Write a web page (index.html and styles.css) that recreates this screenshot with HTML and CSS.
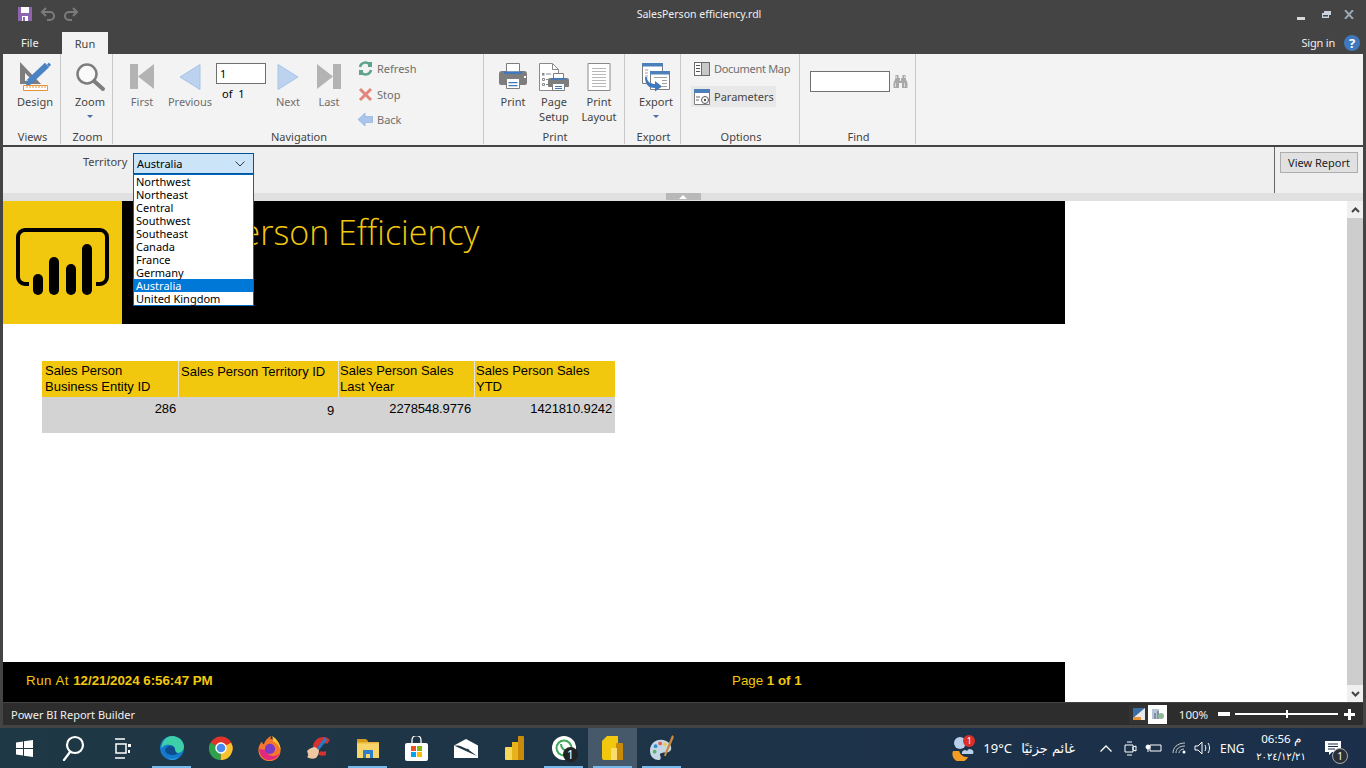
FILE: index.html
```html
<!DOCTYPE html>
<html lang="en">
<head>
<meta charset="utf-8">
<title>SalesPerson efficiency.rdl</title>
<link rel="stylesheet" href="styles.css">
</head>
<body>
<div class="titlebar">
  <div class="qat">
    <svg width="16" height="16" viewBox="0 0 16 16"><path d="M1 1h14v14H1z" fill="#8e63b0"/><path d="M4 1h8v6H4z" fill="#fff"/><path d="M5 10h6v5H5z" fill="#fff"/><path d="M6 11h2v4H6z" fill="#8e63b0"/></svg>
    <svg width="16" height="16" viewBox="0 0 16 16" fill="none" stroke="#7b7b7b" stroke-width="2"><path d="M6 2 2 6l4 4"/><path d="M2 6h8a4 4 0 0 1 0 8H7"/></svg>
    <svg width="16" height="16" viewBox="0 0 16 16" fill="none" stroke="#7b7b7b" stroke-width="2"><path d="m10 2 4 4-4 4"/><path d="M14 6H6a4 4 0 0 0 0 8h3"/></svg>
  </div>
  <div class="doc-title">SalesPerson efficiency.rdl</div>
  <div class="win-btns">
    <svg class="w-min" width="8" height="3" viewBox="0 0 8 3"><path d="M0 0h8v3H0z" fill="#d8d8d8"/></svg>
    <svg class="w-res" width="9" height="7" viewBox="0 0 9 7"><path d="M2 0h7v4H7V2H2z" fill="#c8d4e0"/><path d="M0 2h7v5H0z" fill="#c8d4e0"/><path d="M1 4h5v1.500H1z" fill="#444"/></svg>
    <svg width="10" height="9" viewBox="0 0 10 9" fill="none" stroke="#9aa7b4" stroke-width="2"><path d="m1 0 8 9M9 0 1 9"/></svg>
  </div>
</div>
<div class="tabs">
  <div class="tab-file">File</div>
  <div class="tab-run">Run</div>
  <div class="tab-spacer"></div>
  <div class="signin">Sign in</div>
  <div class="help">?</div>
</div>

<div class="ribbon">
  <section class="group g-views">
    <div class="g-body">
      <div class="rb w50">
        <svg class="ico" width="32" height="32" viewBox="0 0 32 32"><path d="M1 0v22h21z" fill="#7d7d7d"/><path d="M6 11v8h8z" fill="#f3f3f3"/><path d="M10 20 28 3" stroke="#4a83c4" stroke-width="6" fill="none"/><path d="M7.500 18 12 23 7 25z" fill="#4a83c4"/><path d="M28 2.500 30 .5l2 2.500-2 2z" fill="#4a83c4"/><path d="M4.500 23.500h24v5h-24z" fill="#fff" stroke="#e8923a"/><path d="M8 24v2M11 24v2M14 24v2M17 24v2M20 24v2M23 24v2M26 24v2" stroke="#e8923a"/></svg>
        <span>Design</span>
      </div>
    </div>
    <div class="g-label">Views</div>
  </section>

  <section class="group g-zoom">
    <div class="g-body">
      <div class="rb w44">
        <svg class="ico" width="32" height="32" viewBox="0 0 32 32" fill="none"><circle cx="13" cy="12" r="9.500" stroke="#7d7d7d" stroke-width="2.500" fill="#fafafa"/><path d="m20 19 9 8" stroke="#7d7d7d" stroke-width="4" stroke-linecap="round"/></svg>
        <span>Zoom</span>
        <i class="caret"></i>
      </div>
    </div>
    <div class="g-label">Zoom</div>
  </section>

  <section class="group g-nav">
    <div class="g-body">
      <div class="rb w28 dim">
        <svg class="ico" width="26" height="32" viewBox="0 0 26 32"><path d="M1 2h8v25H1zM25 2v25L9 14.500z" fill="#b3b3b3"/></svg>
        <span>First</span>
      </div>
      <div class="rb w50 ml9 dim">
        <svg class="ico" width="24" height="32" viewBox="0 0 24 32"><path d="M22 2.500v25L2 15z" fill="#bcd2ee" stroke="#a8c4e8"/></svg>
        <span>Previous</span>
      </div>
      <div class="page-box">
        <div class="page-input">1</div>
        <div class="page-of">of&nbsp; 1</div>
      </div>
      <div class="rb w30 ml7 dim">
        <svg class="ico" width="24" height="32" viewBox="0 0 24 32"><path d="M2 2.500v25L22 15z" fill="#bcd2ee" stroke="#a8c4e8"/></svg>
        <span>Next</span>
      </div>
      <div class="rb w30 ml11 dim">
        <svg class="ico" width="26" height="32" viewBox="0 0 26 32"><path d="M25 2h-8v25h8zM1 2v25l16-12.500z" fill="#b3b3b3"/></svg>
        <span>Last</span>
      </div>
      <div class="side-col">
        <div class="side-row">
          <svg width="15" height="15" viewBox="0 0 15 15" fill="none" stroke="#5fa38c" stroke-width="2.500"><path d="M2 6a5.500 5.500 0 0 1 10-2"/><path d="M13 9a5.500 5.500 0 0 1-10 2"/><path d="M10 1h4v5h-4z" fill="#5fa38c" stroke="none"/><path d="M1 9h4v5H1z" fill="#5fa38c" stroke="none"/></svg>
          <span>Refresh</span>
        </div>
        <div class="side-row">
          <svg width="15" height="15" viewBox="0 0 15 15" fill="none" stroke="#e2867c" stroke-width="3"><path d="m2 2 11 11M13 2 2 13"/></svg>
          <span>Stop</span>
        </div>
        <div class="side-row">
          <svg width="15" height="15" viewBox="0 0 15 15"><path d="M0 7.500 7 1v3.500h7.500v6H7V14z" fill="#a9c6ea" stroke="#8eb0dc" stroke-width=".7"/></svg>
          <span>Back</span>
        </div>
      </div>
    </div>
    <div class="g-label">Navigation</div>
  </section>

  <section class="group g-print">
    <div class="g-body">
      <div class="rb w36">
        <svg class="ico" width="30" height="32" viewBox="0 0 30 32"><path d="M1 12a3 3 0 0 1 3-3h22a3 3 0 0 1 3 3v9a2 2 0 0 1-2 2H3a2 2 0 0 1-2-2z" fill="#7d7d7d"/><path d="M8.500 1.500h13V10h-13z" fill="#fff" stroke="#7d7d7d"/><path d="M6 9.500h18V12H6z" fill="#3f78bd"/><path d="M8.500 16.500h13v10h-13z" fill="#fff" stroke="#7d7d7d"/><path d="M10.500 20h9v1.200h-9zM10.500 23h9v1.200h-9z" fill="#3f78bd"/><path d="M26 14h2v2h-2z" fill="#fff"/></svg>
        <span>Print</span>
      </div>
      <div class="rb w40 ml3">
        <svg class="ico" width="32" height="32" viewBox="0 0 32 32"><path d="M1.500 1.500h13l6 6v21h-19z" fill="#fff" stroke="#8a8a8a"/><path d="M14.500 1.500v6h6" fill="none" stroke="#8a8a8a"/><path d="M4 11h2.500v2.500H4z" fill="#8a8a8a"/><path d="M4.500 16.500h2v2h-2zM4.500 21.500h2v2h-2z" fill="none" stroke="#8a8a8a"/><path d="M8 12h5M8 17.500h2M8 22.500h2" stroke="#8a8a8a"/><path d="M15.500 11.500h10v6h-10z" fill="#fff" stroke="#7d7d7d"/><path d="M10 18a2 2 0 0 1 2-2h17a2 2 0 0 1 2 2v6a1 1 0 0 1-1 1H11a1 1 0 0 1-1-1z" fill="#7d7d7d"/><path d="M13 16h15v1.800H13z" fill="#3f78bd"/><path d="M14.500 21.500h12v7h-12z" fill="#fff" stroke="#7d7d7d"/><path d="M17 24h7v1h-7zM17 26h7v1h-7z" fill="#3f78bd"/></svg>
        <span>Page<br>Setup</span>
      </div>
      <div class="rb w44 ml3">
        <svg class="ico" width="24" height="32" viewBox="0 0 24 32"><path d="M1 1.500h22v27H1z" fill="#fff" stroke="#8a8a8a"/><path d="M5 6.500h14M5 9.500h14M5 12.500h14M5 15.500h14M5 18.500h14M5 21.500h14M5 24.500h14" stroke="#b8b8b8"/></svg>
        <span>Print<br>Layout</span>
      </div>
    </div>
    <div class="g-label">Print</div>
  </section>

  <section class="group g-export">
    <div class="g-body">
      <div class="rb w44">
        <svg class="ico" width="30" height="32" viewBox="0 0 30 32"><path d="M1.500 1.500h20v20h-20z" fill="#fff" stroke="#7d7d7d"/><path d="M1 1h21v3.500H1z" fill="#4d7fb8"/><path d="M9.500 9.500h19v18h-19z" fill="#fff" stroke="#7d7d7d"/><path d="M9 9h20v3.500H9z" fill="#4d7fb8"/><path d="M4 8h3M4 11h3M4 14h3M13 15.500h13M21 18.500h5M21 21.500h5M21 24.500h5" stroke="#a0a0a0"/><path d="M6 15c0 5 4 7 8 7v-3l7 5.500-7 5v-3.500c-6 0-10-3-10-11z" fill="#3f78bd"/></svg>
        <span>Export</span>
        <i class="caret"></i>
      </div>
    </div>
    <div class="g-label">Export</div>
  </section>

  <section class="group g-options">
    <div class="g-body">
      <div class="opt-col">
        <div class="opt-row">
          <svg width="16" height="14" viewBox="0 0 16 14"><path d="M0 0h16v14H0z" fill="#6b6b6b"/><path d="M1 1h6v12H1z" fill="#fff"/><path d="M8 1h7v12H8z" fill="#c8c8c8"/><path d="M2 3.500h4M2 6.500h4M2 9.500h4" stroke="#555"/></svg>
          <span class="dim-text">Document Map</span>
        </div>
        <div class="opt-row active">
          <svg width="16" height="16" viewBox="0 0 16 16"><path d="M.5.500h15v15H.5z" fill="#fff" stroke="#7d7d7d"/><path d="M0 0h16v4H0z" fill="#4d7fb8"/><path d="M2 8h4M2 11h3" stroke="#666"/><circle cx="11" cy="11" r="3.500" fill="#fff" stroke="#555"/><circle cx="11" cy="11" r="1.200" fill="#555"/></svg>
          <span>Parameters</span>
        </div>
      </div>
    </div>
    <div class="g-label">Options</div>
  </section>

  <section class="group g-find">
    <div class="g-body">
      <div class="find-input"></div>
      <svg class="binoc" width="15" height="15" viewBox="0 0 15 15"><path d="M2.500 1h3v3H7v3h1V4h1.500V1h3v3L14.500 9v5H9V9H6v5H.5V9L2.500 4z" fill="#a8a8a8"/><path d="M3 2h1v2H3zM11 2h1v2h-1zM2 9h1v4H2zM11 9h1v4h-1z" fill="#d8d8d8"/></svg>
    </div>
    <div class="g-label">Find</div>
  </section>
</div>

<div class="params">
  <div class="param-field">
    <label class="param-label">Territory</label>
    <div class="combo">
      <span>Australia</span>
      <svg width="10" height="6" viewBox="0 0 10 6" fill="none" stroke="#3a3a3a"><path d="m.5.500 4.500 4.500L9.500.500"/></svg>
    </div>
    <ul class="combo-list">
      <li>Northwest</li>
      <li>Northeast</li>
      <li>Central</li>
      <li>Southwest</li>
      <li>Southeast</li>
      <li>Canada</li>
      <li>France</li>
      <li>Germany</li>
      <li class="selected">Australia</li>
      <li>United Kingdom</li>
    </ul>
  </div>
  <div class="view-wrap">
    <button class="view-btn">View Report</button>
  </div>
</div>
<div class="splitter"><div class="grip"><svg width="8" height="4" viewBox="0 0 8 4"><path d="M4 0l4 4H0z" fill="#fff"/></svg></div></div>

<div class="viewer">
  <div class="page">
    <header class="rep-head">
      <div class="logo">
        <svg width="119" height="123" viewBox="0 0 119 123">
          <path d="M26 83h-4a7 7 0 0 1-7-7V36a7 7 0 0 1 7-7h75a7 7 0 0 1 7 7v40a7 7 0 0 1-7 7h-4" fill="none" stroke="#000" stroke-width="4"/>
          <rect x="30" y="73" width="10" height="21" rx="5"/>
          <rect x="46" y="56" width="10" height="38" rx="5"/>
          <rect x="63" y="63" width="10" height="31" rx="5"/>
          <rect x="79" y="43" width="10" height="51" rx="5"/>
        </svg>
      </div>
      <h1 class="rep-title">Sales Person Efficiency</h1>
    </header>
    <div class="rep-body">
      <div class="tablix">
        <div class="th">Sales Person<br>Business Entity ID</div>
        <div class="th single">Sales Person Territory ID</div>
        <div class="th">Sales Person Sales<br>Last Year</div>
        <div class="th">Sales Person Sales<br>YTD</div>
        <div class="td">286</div>
        <div class="td low">9</div>
        <div class="td">2278548.9776</div>
        <div class="td">1421810.9242</div>
      </div>
    </div>
    <footer class="rep-foot">
      <div class="foot-run">Run At <b>12/21/2024 6:56:47 PM</b></div>
      <div class="foot-page">Page <b>1 of 1</b></div>
    </footer>
  </div>
  <div class="page-rest"></div>
  <div class="vscroll">
    <div class="sb-btn"><svg width="9" height="6" viewBox="0 0 9 6" fill="none" stroke="#444" stroke-width="2"><path d="m1 5 3.500-3.500L8 5"/></svg></div>
    <div class="sb-thumb"></div>
    <div class="sb-btn"><svg width="9" height="6" viewBox="0 0 9 6" fill="none" stroke="#444" stroke-width="2"><path d="m1 1 3.500 3.500L8 1"/></svg></div>
  </div>
</div>

<div class="statusbar">
  <div class="status-text">Power BI Report Builder</div>
  <div class="status-icons">
    <div class="st-ico"><svg width="14" height="14" viewBox="0 0 14 14"><path d="M1 1h12v12H1z" fill="#e8e8e8"/><path d="M1 1 13 1 1 11z" fill="#3a6ea5"/><path d="M1 10h8v3H1z" fill="#e8923a"/></svg></div>
    <div class="st-ico on"><svg width="14" height="14" viewBox="0 0 14 14"><path d="M1 2h7v10H1z" fill="#b8c4d4"/><path d="M3 6h2v6H3zM6 4h2v8H6z" fill="#7d8fa8"/><circle cx="10" cy="9" r="3" fill="#8fb89a"/></svg></div>
  </div>
  <div class="zoom-pct">100%</div>
  <div class="zoom-minus"></div>
  <div class="zoom-track"><i></i></div>
  <div class="zoom-plus"></div>
</div>
<div class="win-gap"></div>

<div class="taskbar">
  <div class="tb-item"><svg width="17" height="17" viewBox="0 0 17 17" fill="#fff"><path d="M0 2.400 7 1.400V8H0zM8 1.300 17 0v8H8zM0 9h7v6.600l-7-1zM8 9h9v8l-9-1.300z"/></svg></div>
  <div class="tb-item"><svg width="24" height="26" viewBox="0 0 24 26" fill="none" stroke="#fff" stroke-width="2.200"><circle cx="13" cy="10" r="8"/><path d="m8 17-6 8" stroke-linecap="round"/></svg></div>
  <div class="tb-item"><svg width="17" height="21" viewBox="0 0 17 21" fill="none" stroke="#fff" stroke-width="1.500"><path d="M1 1h10M1 20h10M2 6h10v9H2z"/><path d="M14 6h3v3h-3z" fill="#fff" stroke="none"/><path d="M14 12h2v3h-2z" fill="#fff" stroke="none"/></svg></div>
  <div class="tb-item run"><svg width="24" height="24" viewBox="0 0 24 24"><circle cx="12" cy="12" r="12" fill="#1478cc"/><path d="M12 0c7 0 12 5 12 11 0 3-3 6-6 6-3 0-3-2-3-4-1-4-5-5-9-4-2 .5-4 2-5 4C2 5 6 0 12 0z" fill="#3ccfa8"/><path d="M5 14c1-3 4-5 7-4 2 .5 3 2 3 3 0 2 1 4 3 4-1 1-3 2-5 2-4 0-8-2-8-5z" fill="#0d4d8c"/><path d="M19 21c-2 2-4 3-7 3-2 0-3-1-4-2 3 1 7 1 11-1z" fill="#2aa0e8"/></svg></div>
  <div class="tb-item"><svg width="24" height="24" viewBox="0 0 25 25"><circle cx="12.500" cy="12.500" r="12" fill="#e0342b"/><path d="M12.500 12.500 23 7A12 12 0 0 1 12 25z" fill="#f7c32c"/><path d="M12.500 12.500 12 25A12 12 0 0 1 1.500 7z" fill="#2fa14a"/><circle cx="12.500" cy="12.500" r="6" fill="#fff"/><circle cx="12.500" cy="12.500" r="4.500" fill="#4a8af0"/></svg></div>
  <div class="tb-item"><svg width="23" height="25" viewBox="0 0 24 27"><path d="M12 3c6 0 12 5 12 12s-5 12-12 12S0 22 0 15C0 11 2 8 4 6c0 2 1 3 2 3 1-3 3-7 8-9-1 2 0 3-2 3z" fill="#f6762c"/><path d="M15 0c5 3 9 9 9 15-2-4-4-8-8-9z" fill="#ffc22e"/><path d="M1 14c0 7 5 12 11 12 5 0 9-3 11-7-3 3-7 3-10 2-2-1-4-3-5-6z" fill="#e3297f"/><circle cx="12.500" cy="14" r="5.500" fill="#7a3bc8"/></svg></div>
  <div class="tb-item"><svg width="25" height="24" viewBox="0 0 25 24"><path d="M18 1C11 1 7 6 7 11c0 2 .5 4 2 5l4-3c-1-3 1-6 5-6 1 0 2 .5 3 1l3-4c-2-2-4-3-6-3z" fill="#d8312d"/><path d="M20 19c-3 1-6 1-8-1l3-3c1 1 3 1 5 0z" fill="#d8312d"/><path d="M19 1 11 12l2 2 8-10z" fill="#2a78c8"/><path d="M1 15c3-3 6-4 8-4l4 3c0 3-1 6-3 8-3 1-6 1-9-1 2-1 1-3 0-6z" fill="#ecc9a0"/></svg></div>
  <div class="tb-item run"><svg width="22" height="19" viewBox="0 0 22 19"><path d="M0 0h9l2 2v3H0z" fill="#d49a1e"/><path d="M0 3h22v16H0z" fill="#f8d56a"/><path d="M0 3h22v1.500H0z" fill="#eab83a"/><path d="M6 11h10v8h-3v-4H9v4H6z" fill="#2a7fc8"/></svg></div>
  <div class="tb-item"><svg width="23" height="25" viewBox="0 0 23 25"><path d="M7 7V4a4.500 4.500 0 0 1 9 0v3" fill="none" stroke="#fff" stroke-width="1.300"/><rect y="7" width="23" height="18" rx="2" fill="#fff"/><path d="M6 10h5v5H6z" fill="#f25022"/><path d="M12 10h5v5h-5z" fill="#7fba00"/><path d="M6 16h5v5H6z" fill="#00a4ef"/><path d="M12 16h5v5h-5z" fill="#ffb900"/></svg></div>
  <div class="tb-item"><svg width="24" height="19" viewBox="0 0 24 19"><path d="M0 6.500 12 0l12 6.500V19H0z" fill="#fff"/><path d="M0 6.500 14 13l9 4-8-6-3-4.500z" fill="#1f3845"/><path d="M4 6h16l-7 4z" fill="#fff"/></svg></div>
  <div class="tb-item"><svg width="19" height="24" viewBox="0 0 19 24"><path d="M13 0h5a1 1 0 0 1 1 1v23h-6z" fill="#c98a0a"/><path d="M7 6h6v18H7z" fill="#e6b31a"/><path d="M0 12a1 1 0 0 1 1-1h6v13H1a1 1 0 0 1-1-1z" fill="#f5d858"/></svg></div>
  <div class="tb-item run wa">
    <svg width="24" height="24" viewBox="0 0 24 24"><circle cx="12" cy="12" r="12" fill="#fff"/><circle cx="12" cy="12" r="7.500" fill="none" stroke="#3fa85a" stroke-width="2"/><path d="M9 8c0 4 3 7 7 7" stroke="#3fa85a" stroke-width="2" fill="none"/></svg>
    <b class="tb-badge">1</b>
  </div>
  <div class="tb-item run active"><svg width="21" height="24" viewBox="0 0 21 24"><path d="M5 0h11v24H2a2 2 0 0 1-2-2V5z" fill="#f2c80f"/><path d="M14 7h6a1 1 0 0 1 1 1v16h-7z" fill="#c98a0a"/><path d="M9 12h6v12H9z" fill="#f8dc6e"/></svg></div>
  <div class="tb-item run"><svg width="24" height="26" viewBox="0 0 26 28"><path d="M12 5C5 5 0 10 0 17s5 10 9 10c3 0 3-3 2-5s2-3 5-3c5 0 7-2 7-5 0-5-5-9-11-9z" fill="#c6d6e4"/><circle cx="6" cy="12" r="2" fill="#2e8fcf"/><circle cx="11" cy="9" r="2" fill="#e65a4a"/><circle cx="16" cy="10" r="2" fill="#f2c84a"/><circle cx="5" cy="18" r="2" fill="#58b368"/><path d="M24 0 15 22l2 1L26 2z" fill="#c98a3a"/></svg></div>
  <div class="tb-fill"></div>
  <div class="tray">
    <div class="weather">
      <svg width="25" height="25" viewBox="0 0 25 25"><circle cx="9" cy="7" r="6" fill="#b9d0ea"/><path d="M2 15a8 8 0 0 0 15 6 9 9 0 0 1-9-6z" fill="#f59a23"/><path d="M11 18a3 3 0 0 1 5-3 3 3 0 0 1 6 3z" fill="#b9d0ea"/></svg>
      <b class="w-badge">1</b>
    </div>
    <div class="w-temp">19°C</div>
    <div class="w-text" lang="ar" dir="rtl">غائم جزئيًا</div>
    <svg class="t-chev" width="12" height="7" viewBox="0 0 12 7" fill="none" stroke="#fff" stroke-width="1.300"><path d="m.5 6.500 5.500-5.500 5.500 5.500"/></svg>
    <svg class="t-cam" width="13" height="17" viewBox="0 0 13 17" fill="none" stroke="#fff"><path d="M1 5h8v7H1zM9 7l3-1v5l-3-1zM3 2h5M3 15h5"/></svg>
    <svg class="t-bat" width="17" height="10" viewBox="0 0 17 10" fill="none" stroke="#fff"><path d="M5 2h11v6H5z"/><circle cx="3" cy="4" r="2" fill="#fff"/><path d="M3 6v3"/></svg>
    <svg class="t-wifi" width="15" height="12" viewBox="0 0 15 12" fill="none" stroke="#c8c8c8"><path d="M1 11C1 6 5 1 13 1M4 11c0-4 3-7 9-7M7 11c0-2 2-4 5-4"/><circle cx="12" cy="10" r="1.500" fill="#fff" stroke="none"/></svg>
    <svg class="t-vol" width="17" height="14" viewBox="0 0 17 14" fill="none" stroke="#fff"><path d="M1 5h3l4-4v12L4 9H1zM11 4c1 2 1 4 0 6M14 2c2 3 2 7 0 10"/></svg>
    <div class="t-lang">ENG</div>
    <div class="t-clock"><div class="t-time">م 06:56</div><div class="t-date" lang="ar">٢٠٢٤/١٢/٢١</div></div>
    <div class="t-notif">
      <svg width="16" height="14" viewBox="0 0 16 14"><path d="M0 0h16v11H7l-3 3v-3H0z" fill="#fff"/><path d="M3 3h10M3 5.500h10M3 8h7" stroke="#1b2d47"/></svg>
      <b class="n-badge">1</b>
    </div>
  </div>
</div>
</body>
</html>
```
FILE: styles.css
```css
* { box-sizing: border-box; }
html, body { margin: 0; padding: 0; }
body {
  width: 1366px;
  height: 768px;
  overflow: hidden;
  background: #444;
  font-family: "Noto Sans", "Open Sans", sans-serif;
  font-size: 11px;
  color: #444;
  display: flex;
  flex-direction: column;
}

/* title bar */
.titlebar { height: 31px; flex: none; display: grid; grid-template-columns: 1fr auto 1fr; align-items: center; color: #f0f0f0; }
.qat { display: flex; gap: 7px; padding-left: 17px; padding-bottom: 3px; }
.doc-title { font-size: 10.5px; padding-bottom: 3px; padding-left: 32px; }
.win-btns { display: flex; justify-content: flex-end; align-items: center; padding-right: 12px; padding-bottom: 3px; }
.w-min { margin-top: 9px; }
.w-res { margin: 0 13px 0 17px; }

/* tabs */
.tabs { height: 23px; flex: none; display: flex; align-items: flex-end; color: #f0f0f0; }
.tab-file { width: 62px; padding-left: 21px; height: 22px; line-height: 21px; }
.tab-run { width: 46px; height: 22px; line-height: 24px; background: #f3f3f3; color: #444; text-align: center; margin-right: 2px; }
.tab-spacer { flex: 1; }
.signin { height: 22px; line-height: 22px; letter-spacing: -.2px; }
.help { width: 16px; height: 16px; margin: 0 6px 3px 9px; border-radius: 50%; background: #3f78bd; color: #fff; font-weight: 700; font-size: 13px; line-height: 16px; text-align: center; }

/* ribbon */
.ribbon { height: 91px; flex: none; margin: 0 3px; background: #f3f3f3; display: flex; }
.group { flex: none; display: flex; flex-direction: column; border-right: 1px solid #c9c9c9; margin-bottom: 1px; padding-top: 8px; }
.g-views { width: 58px; }
.g-zoom { width: 52px; }
.g-nav { width: 371px; }
.g-print { width: 141px; }
.g-export { width: 56px; }
.g-options { width: 119px; }
.g-find { width: 116px; }
.g-body { flex: 1; display: flex; align-items: flex-start; }
.g-label { height: 14px; line-height: 14px; padding-left: 2px; text-align: center; flex: none; }
.g-views .g-body { padding-left: 7px; }
.g-zoom .g-body { padding-left: 7px; }
.g-nav .g-body { padding-left: 15px; }
.g-print .g-body { padding-left: 11px; }
.g-export .g-body { padding-left: 9px; }

.rb { display: flex; flex-direction: column; align-items: center; text-align: center; line-height: 15px; flex: none; }
.rb span { display: block; }
.ico { display: block; }
.dim { color: #6e6e6e; }
.w28 { width: 28px; }
.w30 { width: 30px; }
.w36 { width: 36px; }
.w40 { width: 40px; }
.w44 { width: 44px; }
.w50 { width: 50px; }
.ml3 { margin-left: 3px; }
.ml7 { margin-left: 7px; }
.ml9 { margin-left: 9px; }
.ml11 { margin-left: 11px; }
.caret { display: block; width: 0; height: 0; margin-top: 6px; border-left: 3px solid transparent; border-right: 3px solid transparent; border-top: 3px solid #4a6fa0; }

.page-box { width: 50px; margin-left: 1px; padding-top: 1px; flex: none; }
.page-input { height: 21px; border: 1px solid #707070; background: #fff; color: #000; padding-left: 3px; line-height: 19px; }
.page-of { padding-left: 6px; line-height: 15px; margin-top: 2px; color: #000; }
.side-col { margin: -1px 0 0 14px; display: flex; flex-direction: column; gap: 10px; }
.side-row { display: flex; align-items: center; gap: 4px; height: 15px; color: #6e6e6e; }
.side-row:first-child { margin-bottom: 1px; }

.opt-col { margin-top: -1px; padding-left: 10px; display: flex; flex-direction: column; gap: 10px; }
.opt-row { display: flex; align-items: center; gap: 4px; height: 15px; padding-left: 3px; }
.opt-row.active { width: 85px; height: 21px; background: #e8e8e8; }
.dim-text { color: #6e6e6e; letter-spacing: -.3px; }

.find-input { width: 80px; height: 21px; margin: 9px 0 0 10px; border: 1px solid #707070; background: #fff; flex: none; }
.binoc { margin: 12px 0 0 3px; }

/* parameters */
.params { height: 46px; flex: none; margin: 2px 3px 0; background: #efefef; display: flex; justify-content: space-between; }
.param-field { position: relative; display: flex; align-items: flex-start; padding: 6px 0 0 80px; }
.param-label { color: #444; line-height: 16px; width: 50px; margin-top: 1px; }
.combo { width: 121px; height: 21px; background: #cce4f7; border: 1px solid #005499; color: #000; display: flex; justify-content: space-between; align-items: center; padding: 0 8px 0 3px; }
.combo-list { position: absolute; left: 130px; top: 27px; width: 121px; margin: 0; padding: 0; list-style: none; background: #fff; border: 1px solid #0067c0; color: #000; height: 132px; z-index: 3; }
.combo-list li { height: 13px; line-height: 13px; padding-left: 2px; }
.combo-list .selected { background: #0078d7; color: #fff; }
.view-wrap { width: 89px; border-left: 1px solid #666; padding: 5px 0 0 5px; }
.view-btn { width: 78px; height: 21px; padding: 0; border: 1px solid #adadad; background: #e1e1e1; color: #222; font: inherit; }

.splitter { height: 8px; flex: none; margin: 0 3px; background: #e0e0e0; display: flex; justify-content: center; }
.grip { width: 35px; height: 7px; background: #b8b8b8; display: flex; justify-content: center; align-items: center; }

/* report viewer */
.viewer { height: 501px; flex: none; margin: 0 3px; background: #fff; display: flex; }
.page { width: 1062px; flex: none; display: flex; flex-direction: column; }
.page-rest { flex: 1; }
.rep-head { height: 123px; flex: none; background: #000; display: flex; }
.logo { width: 119px; background: #f2c80f; flex: none; }
.rep-title { margin: 6px 0 0 12px; font-family: "Open Sans", sans-serif; font-weight: 300; font-size: 34px; line-height: 50px; color: #f2c80f; white-space: nowrap; }
.rep-body { flex: 1; padding: 37px 0 0 39px; }
.tablix { width: 573px; display: grid; grid-template-columns: 137px 160px 136px 140px; grid-template-rows: 36px 36px; font-family: "Liberation Sans", Arial, sans-serif; font-size: 13px; line-height: 16px; color: #000; }
.th { background: #f2c80f; border-right: 1px solid #e4e4e4; padding: 2px 0 0 1px; }
.th:nth-child(1) { padding-left: 3px; }
.th.single { padding: 3px 0 0 2px; }
.th:nth-child(4) { border-right: 0; }
.td { background: #d3d3d3; text-align: right; padding: 4px 3px 0 0; letter-spacing: -.12px; }
.td.low { padding: 6px 5px 0 0; }
.td:nth-child(7) { padding-right: 4px; }
.rep-foot { height: 40px; flex: none; padding-bottom: 3px; background: #000; color: #f2c80f; font-family: "Liberation Sans", Arial, sans-serif; font-size: 13.33px; display: flex; align-items: center; }
.foot-run { width: 729px; padding-left: 23px; flex: none; letter-spacing: .5px; }
.foot-run b { letter-spacing: -.03px; }

.vscroll { width: 16px; flex: none; display: flex; flex-direction: column; background: #f0f0f0; }
.sb-btn { height: 17px; flex: none; display: flex; justify-content: center; align-items: center; }
.sb-thumb { flex: 1; background: #cdcdcd; }

/* status bar */
.statusbar { height: 22px; flex: none; margin: 1px 3px 0; background: #2d2d2d; display: flex; align-items: center; color: #f0f0f0; }
.status-text { padding-left: 8px; flex: 1; }
.status-icons { display: flex; }
.st-ico { width: 19px; height: 19px; display: flex; align-items: center; justify-content: center; background: #333; }
.st-ico.on { background: #fff; }
.zoom-pct { width: 51px; text-align: center; font-size: 11.5px; padding-left: 2px; }
.zoom-minus { width: 12px; height: 4px; background: #fff; }
.zoom-track { width: 103px; height: 2px; margin: 0 6px 0 5px; background: #fff; position: relative; }
.zoom-track i { position: absolute; left: 51px; top: -3px; width: 2px; height: 8px; background: #fff; }
.zoom-plus { width: 11px; height: 11px; margin-right: 8px; background: linear-gradient(#fff, #fff) center / 100% 3px no-repeat, linear-gradient(#fff, #fff) center / 3px 100% no-repeat; }
.win-gap { height: 3px; flex: none; }

/* taskbar */
.taskbar { height: 40px; flex: none; background: linear-gradient(90deg, #1f3845, #1b2f4a); display: flex; color: #fff; }
.tb-item { width: 49px; height: 40px; flex: none; display: flex; align-items: center; justify-content: center; position: relative; }
.tb-item.run::after { content: ""; position: absolute; left: 5px; right: 5px; bottom: 0; height: 2px; background: #76b9ed; }
.tb-item.active { background: #46596a; }
.tb-badge { position: absolute; left: 24px; top: 19px; width: 15px; height: 15px; border-radius: 50%; background: #222; color: #fff; font-size: 12px; font-weight: 400; line-height: 15px; text-align: center; }
.tb-fill { flex: 1; }
.tray { display: flex; align-items: center; font-size: 12px; }
.weather { position: relative; width: 25px; height: 25px; }
.w-badge { position: absolute; left: 12px; top: -1px; width: 12px; height: 12px; border-radius: 50%; background: #d9302c; font-size: 9px; font-weight: 400; line-height: 12px; text-align: center; }
.w-temp { margin-left: 7px; font-size: 13px; }
.w-text { margin-left: 8px; width: 55px; font-family: "DejaVu Sans", sans-serif; font-size: 13px; white-space: nowrap; }
.t-chev { margin-left: 25px; }
.t-cam { margin-left: 12px; }
.t-bat { margin-left: 8px; }
.t-wifi { margin-left: 10px; }
.t-vol { margin-left: 7px; }
.t-lang { margin-left: 9px; width: 27px; }
.t-clock { margin: 0 13px 0 6px; width: 56px; text-align: center; line-height: 18px; }
.t-time { font-size: 11.5px; }
.t-date { font-family: "DejaVu Sans", sans-serif; font-size: 10px; }
.t-notif { position: relative; width: 42px; margin-left: 2px; height: 40px; padding: 13px 0 0 1px; }
.n-badge { position: absolute; left: 8px; top: 20px; width: 16px; height: 16px; border-radius: 50%; background: #2a2f38; border: 1px solid #aaa; font-size: 10px; font-weight: 400; line-height: 14px; text-align: center; }
```
